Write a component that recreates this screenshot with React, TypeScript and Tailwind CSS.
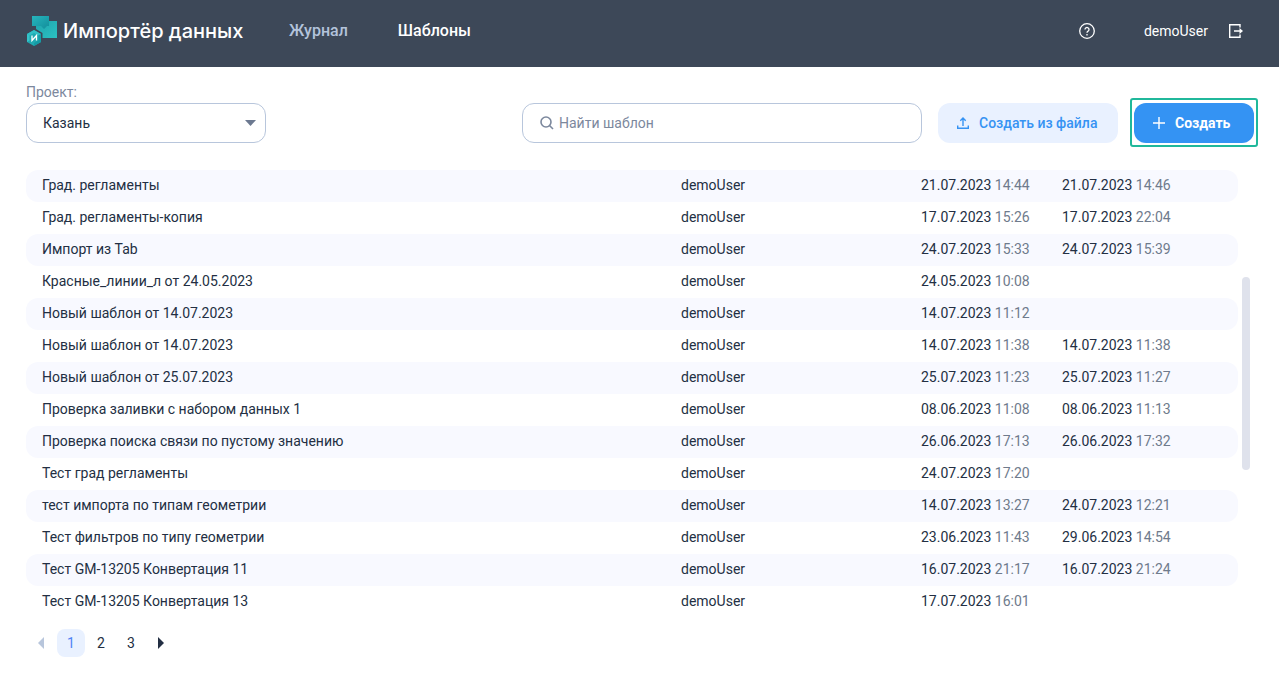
type Template = {
  name: string;
  author: string;
  created: string[];
  launched?: string[];
};

const templates: Template[] = [
  { name: "Град. регламенты", author: "demoUser", created: ["21.07.2023", "14:44"], launched: ["21.07.2023", "14:46"] },
  { name: "Град. регламенты-копия", author: "demoUser", created: ["17.07.2023", "15:26"], launched: ["17.07.2023", "22:04"] },
  { name: "Импорт из Tab", author: "demoUser", created: ["24.07.2023", "15:33"], launched: ["24.07.2023", "15:39"] },
  { name: "Красные_линии_л от 24.05.2023", author: "demoUser", created: ["24.05.2023", "10:08"] },
  { name: "Новый шаблон от 14.07.2023", author: "demoUser", created: ["14.07.2023", "11:12"] },
  { name: "Новый шаблон от 14.07.2023", author: "demoUser", created: ["14.07.2023", "11:38"], launched: ["14.07.2023", "11:38"] },
  { name: "Новый шаблон от 25.07.2023", author: "demoUser", created: ["25.07.2023", "11:23"], launched: ["25.07.2023", "11:27"] },
  { name: "Проверка заливки с набором данных 1", author: "demoUser", created: ["08.06.2023", "11:08"], launched: ["08.06.2023", "11:13"] },
  { name: "Проверка поиска связи по пустому значению", author: "demoUser", created: ["26.06.2023", "17:13"], launched: ["26.06.2023", "17:32"] },
  { name: "Тест град регламенты", author: "demoUser", created: ["24.07.2023", "17:20"] },
  { name: "тест импорта по типам геометрии", author: "demoUser", created: ["14.07.2023", "13:27"], launched: ["24.07.2023", "12:21"] },
  { name: "Тест фильтров по типу геометрии", author: "demoUser", created: ["23.06.2023", "11:43"], launched: ["29.06.2023", "14:54"] },
  { name: "Тест GM-13205 Конвертация 11", author: "demoUser", created: ["16.07.2023", "21:17"], launched: ["16.07.2023", "21:24"] },
  { name: "Тест GM-13205 Конвертация 13", author: "demoUser", created: ["17.07.2023", "16:01"] },
];

function Logo() {
  return (
    <svg className="shrink-0" width="30" height="30" viewBox="0 0 30 30" aria-hidden="true">
      <defs>
        <linearGradient id="back" x1="0" y1="0" x2="1" y2="1">
          <stop offset="0" stopColor="#27b5bd" />
          <stop offset="1" stopColor="#128e9b" />
        </linearGradient>
        <linearGradient id="front" x1="0" y1="0" x2="1" y2="1">
          <stop offset="0" stopColor="#1fa3ac" />
          <stop offset="1" stopColor="#2bc1c2" />
        </linearGradient>
      </defs>
      <path d="M9 5h21v17H15.500v-5L9 13z" fill="url(#front)" />
      <path d="M5 0h17v10h-2l-3 3-3-3H5z" fill="url(#back)" />
      <path d="M7 14l7 4v8l-7 4-7-4v-8z" fill="#20a9b1" />
      <path d="M7 14l7 4-2.500 1.500L7 17l-4.500 2.500L0 18z" fill="#2fc0c6" />
      <path d="M0 18l2.500 1.500v5L0 26z" fill="#35c4ca" />
      <path d="M14 18v8l-7 4v-3l4.500-2.500v-5z" fill="#159ba5" />
      <path d="M5 19.500v5l4.500-5v5" fill="none" stroke="#fff" strokeWidth="1.300" />
    </svg>
  );
}

function HelpIcon() {
  return (
    <svg width="16" height="16" viewBox="0 0 16 16" fill="none" stroke="#fff" strokeWidth="1.300" aria-hidden="true">
      <circle cx="8" cy="8" r="7.300" />
      <path d="M6 6.500a2 2 0 1 1 3.200 1.600C8.400 8.700 8 9 8 9.800M8 11v1.400" />
    </svg>
  );
}

function LogoutIcon() {
  return (
    <svg width="14" height="14" viewBox="0 0 14 14" fill="none" stroke="#fff" strokeWidth="1.400" aria-hidden="true">
      <path d="M11 3.500V.7H.7v12.600H11v-2.800M5 7h7" />
      <path d="M10.500 4L14 7l-3.500 3z" fill="#fff" stroke="none" />
    </svg>
  );
}

function SearchIcon() {
  return (
    <svg width="14" height="14" viewBox="0 0 14 14" fill="none" stroke="#7c889d" strokeWidth="1.600" aria-hidden="true">
      <circle cx="6" cy="6" r="5" />
      <path d="M9.500 9.500l3.500 3.500" />
    </svg>
  );
}

function UploadIcon() {
  return (
    <svg width="12" height="12" viewBox="0 0 12 12" fill="none" stroke="#3693f3" strokeWidth="1.400" aria-hidden="true">
      <path d="M.7 8.500v2.800h10.600V8.500M6 9V1M3.300 3.700L6 1l2.700 2.700" />
    </svg>
  );
}

function Stamp({ value }: { value?: string[] }) {
  if (!value) return null;
  return (
    <>
      {value[0]} <span className="text-[#6f7b8c]">{value[1]}</span>
    </>
  );
}

function Header() {
  return (
    <header className="flex h-[67px] items-center bg-[#3d4858] pr-9 pb-1.5 pl-[27px] text-white">
      <a href="#" className="flex w-[212px] items-center gap-1.5 whitespace-nowrap">
        <Logo />
        <span className="font-[Inter,sans-serif] text-xl font-medium">Импортёр данных</span>
      </a>
      <nav className="ml-[50px] flex flex-1 gap-[50px] text-base font-medium">
        <a href="#journal" className="text-[#b3c3db]">Журнал</a>
        <a href="#templates">Шаблоны</a>
      </nav>
      <button aria-label="Справка" className="mr-[49px]">
        <HelpIcon />
      </button>
      <span className="mr-[21px] text-sm">demoUser</span>
      <button aria-label="Выйти">
        <LogoutIcon />
      </button>
    </header>
  );
}

function Toolbar() {
  return (
    <div className="flex items-end pr-[21px]">
      <div className="mb-1 flex flex-col gap-[3px]">
        <label htmlFor="project" className="leading-4 text-[#7c889d]">Проект:</label>
        <div className="relative">
          <select
            id="project"
            className="h-10 w-60 appearance-none rounded-xl border border-[#b8c6dc] bg-white px-4"
          >
            <option>Казань</option>
          </select>
          <svg className="pointer-events-none absolute top-[17px] right-2.5" width="11" height="6" viewBox="0 0 11 6" aria-hidden="true">
            <path d="M0 0h11L5.500 6z" fill="#6c7990" />
          </svg>
        </div>
      </div>
      <label className="mb-1 ml-auto flex h-10 w-[400px] items-center gap-[5px] rounded-xl border border-[#b8c6dc] px-[17px]">
        <SearchIcon />
        <input
          type="text"
          aria-label="Найти шаблон"
          placeholder="Найти шаблон"
          className="flex-1 outline-none placeholder:text-[#7c889d]"
        />
      </label>
      <button className="mr-3 mb-1 ml-4 flex h-10 w-[180px] items-center gap-2.5 rounded-xl bg-[#e9f1ff] pl-[19px] font-medium text-[#3693f3]">
        <UploadIcon />
        Создать из файла
      </button>
      <div className="rounded-[3px] border-2 border-[#20b89b] p-0.5 pt-[3px]">
        <button className="flex h-10 w-[120px] items-center gap-2.5 rounded-xl bg-[#3493f3] pl-[19px] font-bold text-white">
          <svg width="12" height="12" viewBox="0 0 12 12" stroke="#fff" strokeWidth="1.400" aria-hidden="true">
            <path d="M6 0v12M0 6h12" />
          </svg>
          Создать
        </button>
      </div>
    </div>
  );
}

function TemplatesTable() {
  return (
    <div className="mt-[23px] flex gap-1 pr-[29px]">
      <table className="w-full table-fixed">
        <colgroup>
          <col />
          <col className="w-[240px]" />
          <col className="w-[141px]" />
          <col className="w-[176px]" />
        </colgroup>
        <tbody>
          {templates.map((item, i) => (
            <tr key={i} className="h-8 odd:*:bg-[#f8f9ff]">
              <td className="rounded-l-xl pb-0.5 pl-4">{item.name}</td>
              <td className="pb-0.5">{item.author}</td>
              <td className="pb-0.5"><Stamp value={item.created} /></td>
              <td className="rounded-r-xl pb-0.5"><Stamp value={item.launched} /></td>
            </tr>
          ))}
        </tbody>
      </table>
      <div className="w-2 shrink-0 pt-[107px]">
        <div className="h-[193px] rounded-full bg-[#dfe2ec]" />
      </div>
    </div>
  );
}

function Pagination() {
  return (
    <nav aria-label="Страницы" className="mt-[11px] flex gap-0.5 pl-px">
      <button aria-label="Назад" disabled className="flex size-7 items-center justify-center">
        <svg width="6" height="12" viewBox="0 0 6 12" aria-hidden="true">
          <path d="M6 0v12L0 6z" fill="#b8c6dc" />
        </svg>
      </button>
      <button aria-current="page" className="size-7 rounded-lg bg-[#e9f1ff] text-[#4f83f5]">1</button>
      <button className="size-7">2</button>
      <button className="size-7">3</button>
      <button aria-label="Вперёд" className="flex size-7 items-center justify-center">
        <svg width="6" height="12" viewBox="0 0 6 12" aria-hidden="true">
          <path d="M0 0v12l6-6z" fill="#232f43" />
        </svg>
      </button>
    </nav>
  );
}

export default function App() {
  return (
    <div className="min-h-screen bg-white font-[Roboto,sans-serif] text-sm text-[#232f43]">
      <Header />
      <main className="pt-[17px] pl-[26px]">
        <Toolbar />
        <TemplatesTable />
        <Pagination />
      </main>
    </div>
  );
}
